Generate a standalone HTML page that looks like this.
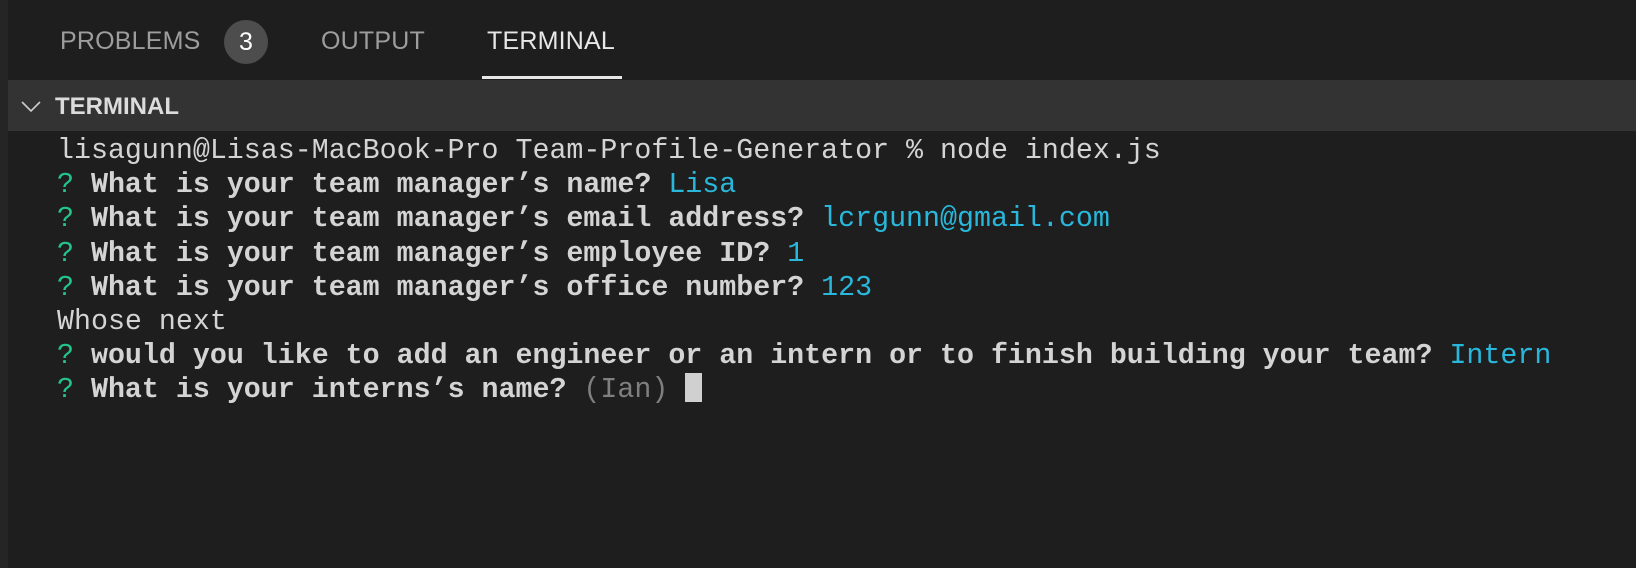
<!DOCTYPE html>
<html><head><style>
html,body{margin:0;padding:0;}
body{width:1636px;height:568px;background:#1e1e1e;position:relative;overflow:hidden;font-family:"Liberation Sans",sans-serif;}
.strip{position:absolute;left:0;top:0;width:8px;height:568px;background:#252526;}
.tab{position:absolute;top:27px;font-size:25px;color:#9d9d9d;letter-spacing:0.2px;}
.badge{position:absolute;left:224px;top:20px;width:44px;height:44px;border-radius:50%;background:#4d4d4d;color:#fff;font-size:25px;text-align:center;line-height:44px;}
.ul{position:absolute;left:482px;top:76px;width:140px;height:3px;background:#e7e7e7;}
.hdr{position:absolute;left:8px;top:80px;width:1628px;height:51px;background:#333333;}
.hdr .t{position:absolute;left:47px;top:13px;font-size:24px;font-weight:bold;color:#dcdcdc;}
.term{position:absolute;left:57px;top:134px;font-family:"Liberation Mono",monospace;font-size:28.3px;line-height:34.2px;color:#d4d4d4;white-space:pre;}
.b{font-weight:bold;}
.g{color:#23c48a;}
.c{color:#29b8db;}
.d{color:#7f7f7f;}
.cur{display:inline-block;width:17px;height:29px;background:#d0d0d0;vertical-align:-5px;}
</style></head><body>
<div class="strip"></div>
<div class="tab" style="left:60px">PROBLEMS</div>
<div class="badge">3</div>
<div class="tab" style="left:321px">OUTPUT</div>
<div class="tab" style="left:487px;color:#e7e7e7">TERMINAL</div>
<div class="ul"></div>
<div class="hdr">
<svg style="position:absolute;left:13px;top:21px" width="20" height="12" viewBox="0 0 20 12"><path d="M1 1 L10 10 L19 1" fill="none" stroke="#cccccc" stroke-width="1.6"/></svg>
<div class="t">TERMINAL</div></div>
<div class="term">lisagunn@Lisas-MacBook-Pro Team-Profile-Generator % node index.js
<span class="g">?</span> <span class="b">What is your team manager’s name?</span> <span class="c">Lisa</span>
<span class="g">?</span> <span class="b">What is your team manager’s email address?</span> <span class="c">lcrgunn@gmail.com</span>
<span class="g">?</span> <span class="b">What is your team manager’s employee ID?</span> <span class="c">1</span>
<span class="g">?</span> <span class="b">What is your team manager’s office number?</span> <span class="c">123</span>
Whose next
<span class="g">?</span> <span class="b">would you like to add an engineer or an intern or to finish building your team?</span> <span class="c">Intern</span>
<span class="g">?</span> <span class="b">What is your interns’s name?</span> <span class="d">(Ian)</span> <span class="cur"></span></div>
</body></html>
